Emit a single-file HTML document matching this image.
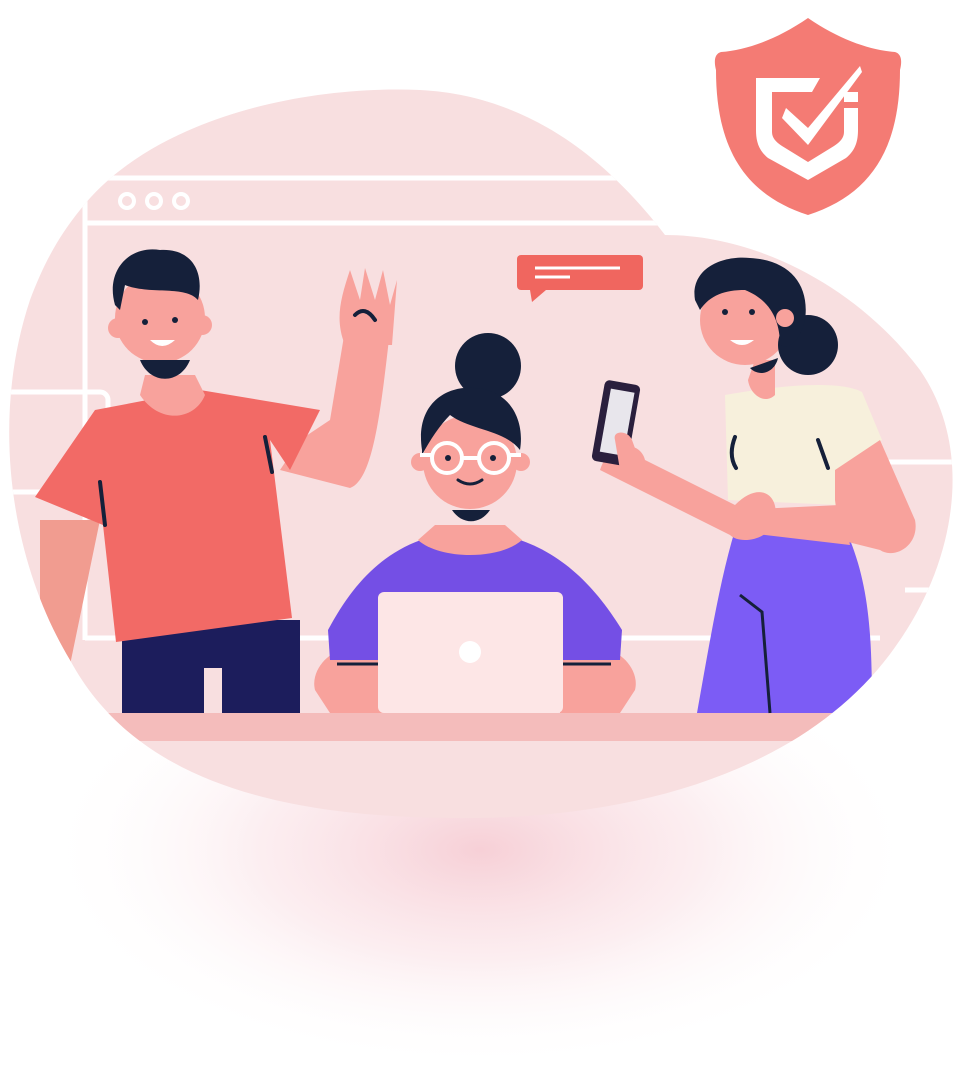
<!DOCTYPE html>
<html><head><meta charset="utf-8"><style>html,body{margin:0;padding:0;background:#fff;width:960px;height:1088px;overflow:hidden}svg{display:block}</style></head>
<body>
<svg width="960" height="1088" viewBox="0 0 960 1088" xmlns="http://www.w3.org/2000/svg">
<defs>
<radialGradient id="sh" cx="480" cy="850" r="440" gradientTransform="matrix(1 0 0 0.5 0 425)" gradientUnits="userSpaceOnUse">
<stop offset="0" stop-color="#f4c0c9" stop-opacity="0.75"/>
<stop offset="0.5" stop-color="#f9dde2" stop-opacity="0.5"/>
<stop offset="1" stop-color="#fff" stop-opacity="0"/>
</radialGradient>
<clipPath id="blob"><path d="M80 210 C150 120 300 85 420 90 C520 95 600 150 665 235 C760 235 860 290 920 370 C975 450 955 560 900 640 C820 760 660 815 480 818 C300 820 140 790 70 660 C10 560 -10 420 30 300 C45 260 60 235 80 210 Z"/></clipPath>
</defs>
<ellipse cx="480" cy="860" rx="440" ry="220" fill="url(#sh)"/>
<g clip-path="url(#blob)">
<rect x="0" y="0" width="960" height="1088" fill="#f8dfe0"/>
<g fill="none" stroke="#fff" stroke-width="5">
<path d="M85 640 V178 H720"/><line x1="85" y1="223" x2="720" y2="223"/>
<line x1="85" y1="638" x2="880" y2="638"/>
<rect x="2" y="392" width="106" height="100" rx="8"/>
<path d="M870 462 H960"/><path d="M905 590 H960"/>
</g>
<circle cx="127" cy="201" r="7" fill="none" stroke="#fff" stroke-width="4"/>
<circle cx="154" cy="201" r="7" fill="none" stroke="#fff" stroke-width="4"/>
<circle cx="181" cy="201" r="7" fill="none" stroke="#fff" stroke-width="4"/>
<rect x="0" y="713" width="960" height="28" fill="#f4bcbb"/>
<path d="M40 520 L100 520 L70 665 L40 640 Z" fill="#f19c90"/>
<rect x="122" y="620" width="178" height="93" fill="#1c1d5c"/>
<rect x="204" y="668" width="18" height="45" fill="#f8dfe0"/>
<path d="M280 470 L350 488 C372 480 380 420 390 330 L345 330 L330 420 L300 440 Z" fill="#f8a29c"/>
<path d="M345 345 C335 320 340 300 350 270 L360 300 L365 268 L375 300 L383 270 L390 305 L397 280 L392 345 Z" fill="#f8a29c"/>
<path d="M35 497 L95 410 L200 390 L320 410 L290 470 L270 440 L292 618 L116 642 L103 525 Z" fill="#f26a66"/>
<path d="M140 395 C160 425 195 420 205 395 L195 375 L145 375 Z" fill="#f8a29c"/>
<circle cx="160" cy="318" r="45" fill="#f8a29c"/>
<path d="M140 360 C150 385 180 385 190 360 Z" fill="#15203a"/>
<path d="M115 305 C105 270 130 245 160 250 C190 248 205 270 198 300 C185 285 150 295 125 285 L120 310 Z" fill="#15203a"/>
<circle cx="118" cy="328" r="10" fill="#f8a29c"/><circle cx="202" cy="325" r="10" fill="#f8a29c"/>
<path d="M150 340 Q162 352 175 340 Z" fill="#fff"/>
<circle cx="145" cy="322" r="3" fill="#15203a"/><circle cx="175" cy="320" r="3" fill="#15203a"/>
<path d="M100 482 L105 525 M265 437 L272 472 M355 315 Q365 305 375 320" stroke="#15203a" stroke-width="4" fill="none" stroke-linecap="round"/>
<path d="M315 690 C310 670 330 650 345 650 L385 660 L385 713 L330 713 Z" fill="#f8a29c"/>
<path d="M635 690 C640 670 620 650 605 650 L560 660 L560 713 L620 713 Z" fill="#f8a29c"/>
<path d="M328 630 C360 570 400 535 470 530 C540 535 585 570 622 630 L620 660 L330 660 Z" fill="#744fe5"/>
<path d="M418 540 C440 560 500 560 522 540 L505 525 L435 525 Z" fill="#f8a29c"/>
<path d="M337 664 H611" stroke="#15203a" stroke-width="3"/>
<rect x="378" y="592" width="185" height="121" rx="6" fill="#fde6e6"/>
<circle cx="470" cy="652" r="11" fill="#fff"/>
<circle cx="470" cy="462" r="47" fill="#f8a29c"/>
<path d="M452 510 C462 525 480 525 490 510 Z" fill="#15203a"/>
<circle cx="488" cy="366" r="33" fill="#15203a"/>
<path d="M422 450 C415 405 445 385 475 388 C510 390 525 420 520 450 C505 430 470 430 450 415 C440 425 430 440 422 455 Z" fill="#15203a"/>
<circle cx="420" cy="462" r="9" fill="#f8a29c"/><circle cx="521" cy="462" r="9" fill="#f8a29c"/>
<circle cx="447" cy="458" r="15" fill="none" stroke="#fff" stroke-width="4"/>
<circle cx="494" cy="458" r="15" fill="none" stroke="#fff" stroke-width="4"/>
<path d="M462 458 H479 M432 455 H420 M509 455 H521" stroke="#fff" stroke-width="4"/>
<circle cx="448" cy="458" r="3" fill="#15203a"/><circle cx="493" cy="458" r="3" fill="#15203a"/>
<path d="M458 480 Q470 488 482 480" stroke="#15203a" stroke-width="3" fill="none" stroke-linecap="round"/>
<path d="M735 530 L850 540 C870 590 872 640 872 713 L697 713 C710 640 720 580 735 530 Z" fill="#7c5cf5"/>
<path d="M740 595 L762 612 L770 713" stroke="#15203a" stroke-width="3" fill="none"/>
<path d="M725 395 C780 385 840 380 862 392 L882 440 L840 470 L838 505 L728 500 Z" fill="#f7f0dc"/>
<path d="M835 470 L880 440 L915 520 C920 545 895 560 880 550 L840 540 L835 500 Z" fill="#f8a29c"/>
<path d="M600 470 C610 440 640 440 645 460 L735 505 C760 480 780 495 775 520 C770 540 740 545 730 535 Z" fill="#f8a29c"/>
<path d="M735 510 L840 505 L850 545 L740 532 Z" fill="#f8a29c"/>
<path d="M735 437 Q728 455 736 468 M818 440 L828 468" stroke="#15203a" stroke-width="4" fill="none" stroke-linecap="round"/>
<rect x="598" y="382" width="36" height="82" rx="5" fill="#2a1f3d" transform="rotate(10 616 423)"/>
<rect x="605" y="390" width="24" height="64" fill="#e8e6ec" transform="rotate(10 616 423)"/>
<path d="M615 440 C612 430 628 430 632 440 L640 462 L620 470 Z" fill="#f8a29c"/>
<path d="M755 360 L775 360 L775 395 C765 405 750 395 748 380 Z" fill="#f8a29c"/>
<circle cx="745" cy="320" r="45" fill="#f8a29c"/>
<path d="M750 368 C760 378 775 372 778 358 Z" fill="#15203a"/>
<circle cx="808" cy="345" r="30" fill="#15203a"/>
<path d="M695 300 C690 270 720 255 750 258 C790 260 810 285 805 320 C800 340 790 350 780 345 C780 320 770 300 745 290 C725 290 710 295 700 310 Z" fill="#15203a"/>
<circle cx="712" cy="328" r="9" fill="#f8a29c"/><circle cx="785" cy="318" r="9" fill="#f8a29c"/>
<circle cx="725" cy="312" r="3" fill="#15203a"/><circle cx="752" cy="312" r="3" fill="#15203a"/>
<path d="M730 340 Q742 350 754 340 Z" fill="#fff"/>
</g>
<rect x="517" y="255" width="126" height="35" rx="4" fill="#f0665f"/>
<path d="M530 290 L532 302 L546 290 Z" fill="#f0665f"/>
<path d="M535 268 H620 M535 277 H570" stroke="#fff" stroke-width="3"/>
<path d="M808 18 C840 40 870 50 895 52 C902 54 902 62 900 70 C900 150 870 195 808 215 C746 195 716 150 716 70 C714 62 714 54 721 52 C746 50 776 40 808 18 Z" fill="#f47b74"/>
<path d="M808 180 L768 158 C758 150 756 140 756 130 V78 H820 L812 92 H772 V132 C772 138 776 142 782 146 L808 162 L834 146 C840 142 844 138 844 132 V108 H858 V130 C858 140 856 150 846 158 Z" fill="#fff"/>
<path d="M786 108 L808 128 L860 66 L862 72 L808 145 L782 118 Z" fill="#fff"/>
<rect x="844" y="92" width="14" height="10" fill="#fff"/>
</svg>
</body></html>
